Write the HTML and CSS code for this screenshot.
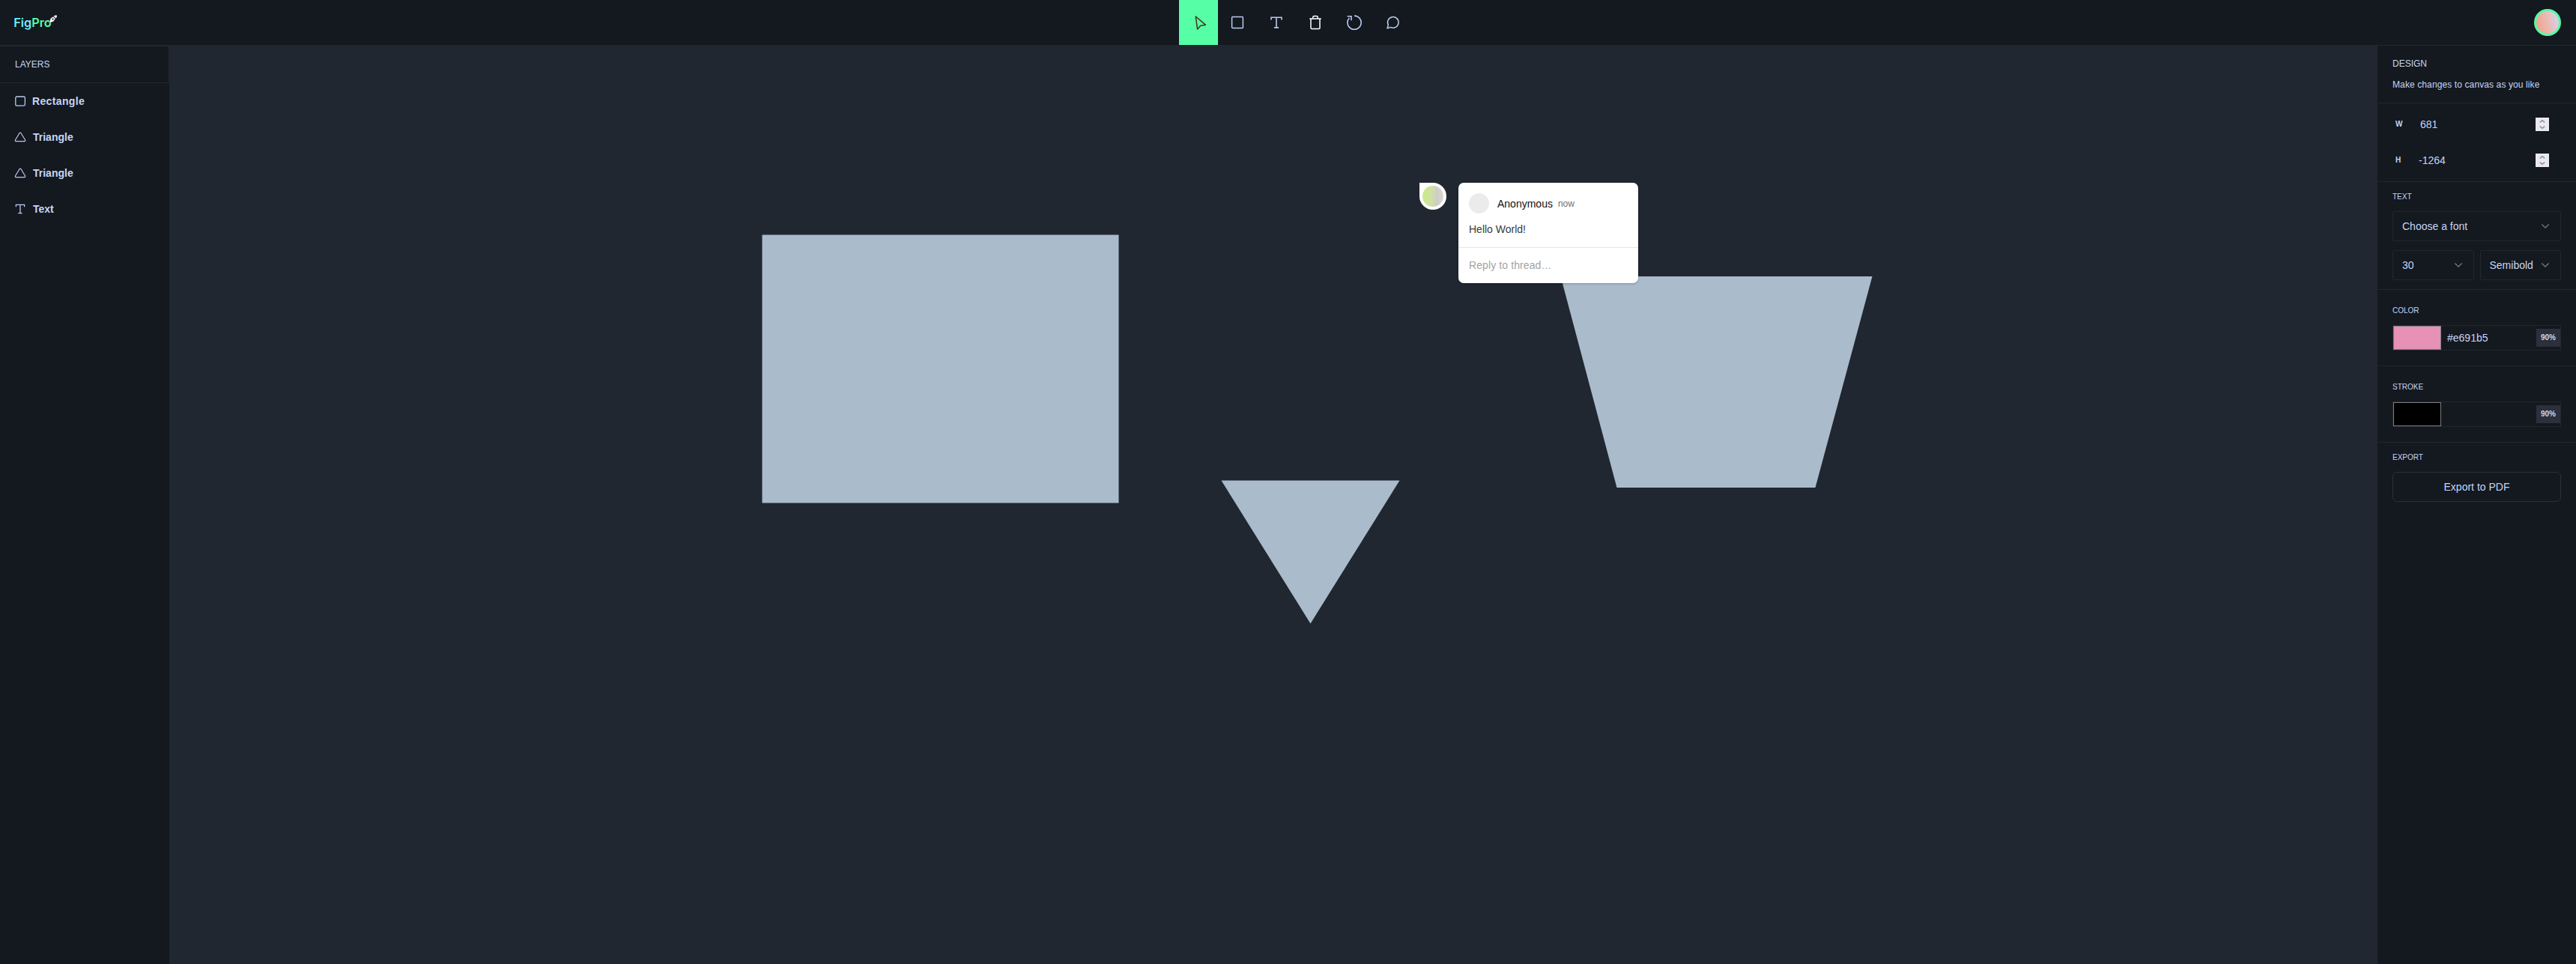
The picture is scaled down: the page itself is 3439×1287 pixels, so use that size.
FILE: index.html
```html
<!DOCTYPE html>
<html lang="en">
<head>
<meta charset="utf-8">
<title>FigPro</title>
<link rel="stylesheet" href="styles.css">
</head>
<body>
<header class="topbar">
  <svg class="logo" width="58" height="24" viewBox="0 0 58 24">
    <text class="logo-text" x="-0.8" y="17.8" textLength="50.5" lengthAdjust="spacingAndGlyphs"><tspan fill="#6eebff">Fig</tspan><tspan fill="#56ffa6">Pro</tspan></text>
    <path d="M46.5 13.2 L48.4 6.6 L52 4 L55 7 L52.6 10.6 Z" fill="#fff" stroke="#14181f" stroke-width=".5"/>
    <path d="M52.6 3.6 L54.6 2.6 L57 2.6 L56.8 4.4 L55.6 6.6 Z" fill="#fff"/>
    <circle cx="51.5" cy="7.6" r="1.1" fill="#14181f"/>
  </svg>
  <nav class="tools">
    <button class="tool active"><svg width="20" height="20" viewBox="0 0 20 20" fill="none" stroke="#3d3a1c" stroke-width="1.6" stroke-linejoin="round"><path d="M4.3 2 17.3 13.2 10.8 14.3 6.6 19Z"/></svg></button>
    <button class="tool"><svg width="20" height="20" viewBox="0 0 20 20" fill="none" stroke="#b8cbee" stroke-width="1.5"><rect x="2.6" y="2.6" width="14.8" height="14.8" rx="1"/></svg></button>
    <button class="tool"><svg width="20" height="20" viewBox="0 0 20 20" fill="none" stroke="#b8cbee" stroke-width="1.6" stroke-linecap="round"><path d="M3 6V3.2H17V6M10 3.2V16.8M7.5 16.9H12.5"/></svg></button>
    <button class="tool"><svg width="20" height="20" viewBox="0 0 20 20" fill="none" stroke="#fff" stroke-width="1.5" stroke-linecap="round" stroke-linejoin="round"><path d="M2.8 5H17.2M4 5V17.2Q4 18.6 5.4 18.6H14.6Q16 18.6 16 17.2V5M6.8 5V3Q6.8 1.5 8.3 1.5H11.7Q13.2 1.5 13.2 3V5"/></svg></button>
    <button class="tool"><svg width="20" height="20" viewBox="0 0 20 20" fill="none" stroke="#b8cbee" stroke-width="1.6"><path d="M10 1.1A9.1 9.1 0 1 1 3.4 4M.6 1.8H6V7.2"/></svg></button>
    <button class="tool"><svg width="20" height="20" viewBox="0 0 20 20" fill="none" stroke="#b8cbee" stroke-width="1.5" stroke-linejoin="round"><path d="M3.4 13.4A7.3 7.3 0 1 1 6.5 16.4L2 17.8Z"/></svg></button>
  </nav>
  <div class="avatar"></div>
</header>
<div class="workspace">
  <aside class="layers">
    <h3 class="layers-title">LAYERS</h3>
    <ul class="layer-list">
      <li class="layer"><svg width="16" height="16" viewBox="0 0 16 16" fill="none" stroke="#b8cbee" stroke-width="1.3"><rect x="1.8" y="2" width="12.6" height="12.2" rx="1.8"/></svg><span class="layer-name layer-name-wide">Rectangle</span></li>
      <li class="layer"><svg width="16" height="16" viewBox="0 0 16 16" fill="none" stroke="#b8cbee" stroke-width="1.2" stroke-linejoin="round"><path d="M7.1 2.5Q8 1.6 8.9 2.5L14.7 12Q15 13.5 13.7 13.6H2.3Q1 13.5 1.4 12Z"/></svg><span class="layer-name layer-name-in">Triangle</span></li>
      <li class="layer"><svg width="16" height="16" viewBox="0 0 16 16" fill="none" stroke="#b8cbee" stroke-width="1.2" stroke-linejoin="round"><path d="M7.1 2.5Q8 1.6 8.9 2.5L14.7 12Q15 13.5 13.7 13.6H2.3Q1 13.5 1.4 12Z"/></svg><span class="layer-name layer-name-in">Triangle</span></li>
      <li class="layer"><svg width="16" height="16" viewBox="0 0 16 16" fill="none" stroke="#b8cbee" stroke-width="1.3" stroke-linecap="round"><path d="M2.4 4.7V2.4H13.6V4.7M8 2.4V13.6M5.8 13.7H10.2"/></svg><span class="layer-name layer-name-in">Text</span></li>
    </ul>
  </aside>
  <main class="canvas">
    <svg class="shapes" width="2948" height="1227" viewBox="226 60 2948 1227" fill="#aabbcc">
      <rect x="1017.5" y="313.5" width="476" height="358"/>
      <path d="M1630.5 641.5H1868.5L1749.5 832.5Z"/>
      <path d="M2083.5 369H2499.5L2423.5 651H2158.5Z"/>
    </svg>
    <div class="thread">
      <div class="pin"><div class="pin-face"></div></div>
      <div class="card">
        <div class="comment">
          <div class="comment-head"><span class="face"></span><span class="author">Anonymous</span><span class="time">now</span></div>
          <p class="comment-text">Hello World!</p>
        </div>
        <div class="reply">Reply to thread…</div>
      </div>
    </div>
  </main>
  <aside class="design">
    <section class="intro">
      <h3 class="intro-title">DESIGN</h3>
      <p class="intro-text">Make changes to canvas as you like</p>
    </section>
    <section class="size">
      <div class="field"><label class="field-label">W</label><span class="field-value">681</span><span class="spinner"><svg width="18" height="18" viewBox="0 0 18 18" fill="none" stroke="#8f8f9c" stroke-width="1.5"><path d="M5.8 6.3 9 3.7 12.2 6.3M5.8 11.7 9 14.3 12.2 11.7"/></svg></span></div>
      <div class="field"><label class="field-label">H</label><span class="field-value field-negative">-1264</span><span class="spinner"><svg width="18" height="18" viewBox="0 0 18 18" fill="none" stroke="#8f8f9c" stroke-width="1.5"><path d="M5.8 6.3 9 3.7 12.2 6.3M5.8 11.7 9 14.3 12.2 11.7"/></svg></span></div>
    </section>
    <section class="type">
      <h3 class="label">TEXT</h3>
      <div class="select"><span>Choose a font</span><svg width="12" height="8" viewBox="0 0 12 8" fill="none" stroke="#70757f" stroke-width="1.4"><path d="M1.3 1.5 6 6 10.7 1.5"/></svg></div>
      <div class="pair">
        <div class="select"><span>30</span><svg width="12" height="8" viewBox="0 0 12 8" fill="none" stroke="#70757f" stroke-width="1.4"><path d="M1.3 1.5 6 6 10.7 1.5"/></svg></div>
        <div class="select"><span>Semibold</span><svg width="12" height="8" viewBox="0 0 12 8" fill="none" stroke="#70757f" stroke-width="1.4"><path d="M1.3 1.5 6 6 10.7 1.5"/></svg></div>
      </div>
    </section>
    <section class="paint">
      <h3 class="label">COLOR</h3>
      <div class="swatch-row"><span class="swatch swatch-fill"></span><span class="hex">#e691b5</span><span class="opacity">90%</span></div>
    </section>
    <section class="paint paint-stroke">
      <h3 class="label">STROKE</h3>
      <div class="swatch-row"><span class="swatch swatch-stroke"></span><span class="hex"></span><span class="opacity">90%</span></div>
    </section>
    <section class="export">
      <h3 class="label">EXPORT</h3>
      <button class="export-button">Export to PDF</button>
    </section>
  </aside>
</div>
</body>
</html>
```
FILE: styles.css
```css
* { box-sizing: border-box; margin: 0; padding: 0; }
body {
  height: 1287px;
  display: flex;
  flex-direction: column;
  background: #202731;
  color: #c5d6f5;
  font-family: "Liberation Sans", Arial, sans-serif;
  font-size: 14px;
  line-height: 20px;
  overflow: hidden;
}
svg { display: block; flex: none; }
button { border: 0; background: none; font: inherit; color: inherit; }
h3 { font-weight: 400; }

.topbar {
  display: grid;
  grid-template-columns: 1fr auto 1fr;
  align-items: center;
  height: 60px;
  padding: 0 20px 0 19px;
  background: #14181f;
}
.logo-text { font: 600 16px Inter, sans-serif; }
.tools { display: flex; height: 60px; margin-left: 22px; }
.tool { width: 52px; display: flex; align-items: center; justify-content: center; }
.tool.active { background: #56ffa6; padding-left: 4px; }
.avatar {
  justify-self: end;
  width: 36px;
  height: 36px;
  border-radius: 50%;
  border: 3px solid #56ffa6;
  background: linear-gradient(75deg, #f2a58e 10%, #e9b9ae 48%, #dccde0 85%);
}

.workspace { flex: 1; display: flex; min-height: 0; }
.layers { width: 226px; background: #14181f; border-top: 2px solid #202731; }
.layers-title {
  height: 49px;
  padding: 14px 20px 0;
  border-bottom: 1px solid #22272f;
  font-size: 12px;
  border-right: 1px solid #22272f;
}
.layer-list { list-style: none; }
.layer { height: 48px; display: flex; align-items: center; gap: 8px; padding-left: 19px; }
.layer-name { font-weight: 700; }
.layer-name-in { padding-left: 1px; }
.layer-name-wide { letter-spacing: .35px; }

.canvas { flex: 1; position: relative; }
.thread { position: absolute; left: 1669px; top: 184px; display: flex; align-items: flex-start; gap: 16px; }
.pin { width: 36px; height: 36px; padding: 4px; background: #fff; border-radius: 0 18px 18px 18px; }
.pin-face { width: 28px; height: 28px; border-radius: 50%; background: linear-gradient(90deg, #c9eb84, #d0e0a8 45%, #cdcdc8 70%, #dcd5d5); }
.card { width: 240px; height: 134px; background: #fff; border-radius: 7px; box-shadow: 0 1px 3px rgba(0, 0, 0, .25); }
.comment { height: 87px; padding: 14px; border-bottom: 1px solid #e6e6e6; }
.comment-head { display: flex; align-items: center; height: 27px; }
.face { width: 27px; height: 27px; border-radius: 50%; background: #ebebeb; margin-right: 11px; }
.author { color: #111; margin-right: 7px; }
.time { color: #707070; font-size: 12px; padding-top: 1px; }
.comment-text { color: #3a3a3a; padding-top: 11px; }
.reply { padding: 13px 14px; color: #a3a3a3; letter-spacing: .1px; }

.design { width: 265px; background: #14181f; border-top: 1px solid #22272f; }
.design section { border-bottom: 1px solid #22272f; padding: 0 20px; }
.design .intro { height: 77px; padding-top: 14px; font-size: 12px; }
.intro-title { font-size: 12px; }
.intro-text { padding-top: 8px; letter-spacing: .11px; }
.design .size { height: 105px; padding-top: 4px; }
.field { display: flex; align-items: center; height: 48px; padding: 0 16px 0 4px; }
.field-label { width: 33px; font-size: 10px; font-weight: 700; }
.field-negative { margin-left: -2px; }
.spinner { margin-left: auto; background: #e9e9ee; }
.label { font-size: 10px; line-height: 15px; }
.design .type { height: 144px; padding-top: 12px; }
.select {
  flex: 1;
  display: flex;
  align-items: center;
  justify-content: space-between;
  height: 40px;
  padding: 0 14px 0 12px;
  border: 1px solid #22272f;
  border-radius: 2px;
}
.type > .select { margin-top: 12px; }
.pair { display: grid; grid-template-columns: 1fr 1fr; gap: 8px; margin-top: 12px; }
.design .paint { height: 102px; padding-top: 20px; }
.swatch-row { display: flex; align-items: center; height: 34px; margin-top: 12px; border: 1px solid #22272f; }
.swatch { width: 64px; height: 32px; border: 1px solid #7d7d7d; }
.swatch-fill { background: #e691b5; }
.swatch-stroke { background: #000; }
.hex { flex: 1; padding-left: 8px; }
.opacity { width: 32px; height: 24px; background: #2b303b; font-size: 10px; font-weight: 700; line-height: 24px; text-align: center; }
.design .export { border: 0; padding-top: 12px; }
.export-button { width: 225px; height: 40px; margin-top: 12px; border: 1px solid #2b303b; border-radius: 6px; }
```
